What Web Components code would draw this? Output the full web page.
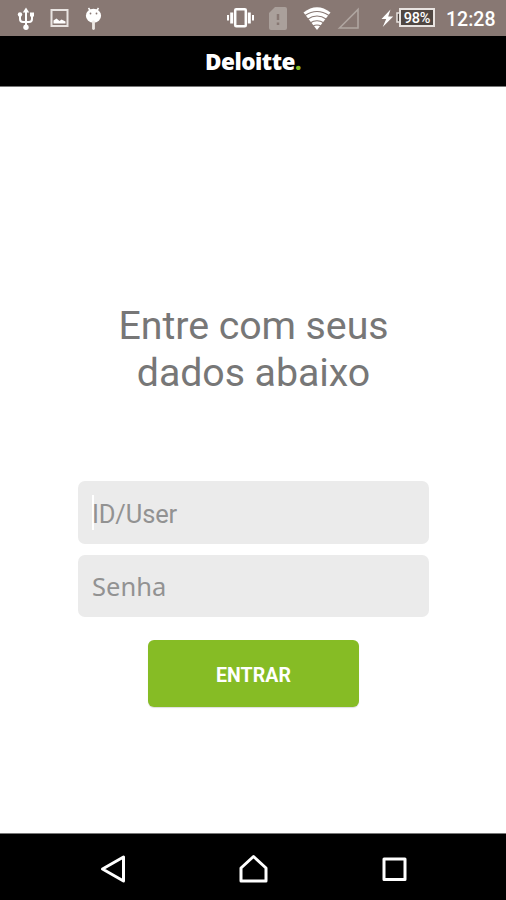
<!DOCTYPE html>
<html lang="pt-BR"><head><meta charset="utf-8"><title>Deloitte</title>
<style>html,body{margin:0;height:100%;background:#fff}</style></head><body>
<login-app></login-app>
<script>
const define=(name,html)=>customElements.define(name,class extends HTMLElement{
  constructor(){super();const t=document.createElement('template');t.innerHTML=html;
    this.attachShadow({mode:'open'}).append(t.content.cloneNode(true));}
});

define('status-bar',`<style>
:host{display:flex;height:36px;background:#887873;box-sizing:border-box;padding:0 12px 0 16px;align-items:flex-start;color:#fff;font:500 19.5px/36px Roboto,sans-serif}
svg{display:block;flex:none;overflow:visible}
.sp{flex:1}
.time{letter-spacing:0;padding-top:2px;width:48px;white-space:nowrap;text-align:right}
.bat{width:32px;height:15px;margin:8px 11px 0 0;border:2px solid #e9e4e1;background:#504742;font:500 14.5px/17px Roboto,sans-serif;text-align:center;letter-spacing:-.2px;flex:none;white-space:nowrap}
</style>
<svg width="20" height="36" viewBox="16 0 20 36" fill="none" stroke="#fff" stroke-width="2"><path d="M26 11v16M20 14v5q0 3 3 3h6q3 0 3-3v-5"/><g fill="#fff" stroke="none"><path d="M26 7.500l3.200 5h-6.400z"/><circle cx="20" cy="14.500" r="2.200"/><path d="M30 12.500h4v4h-4z"/><circle cx="26" cy="27.200" r="2.700"/></g></svg>
<svg style="margin-left:14px" width="20" height="36" viewBox="50 0 20 36"><path d="M51.500 10h16v16h-16z" fill="none" stroke="#e9e4e1" stroke-width="2"/><path d="M53.500 23.500v-3l3-2 3 2.500 2-1.500 4 2v2z" fill="#fff"/></svg>
<svg style="margin-left:15px" width="18" height="36" viewBox="85 0 18 36"><ellipse cx="93.500" cy="15.800" rx="7.600" ry="7" fill="#fff"/><path d="M88.500 8l2 3M98.500 8l-2 3" stroke="#fff" stroke-width="1.500"/><path d="M93.500 22v6.500" stroke="#eee9e5" stroke-width="2.800" stroke-linecap="round"/><circle cx="90.500" cy="13.500" r=".9" fill="#887873"/><circle cx="96.500" cy="13.500" r=".9" fill="#887873"/></svg>
<span class="sp"></span>
<svg style="margin-right:14px" width="28" height="36" viewBox="227 0 28 36" fill="none" stroke="#fff"><rect x="235.200" y="9.200" width="10.600" height="17" rx="1" stroke-width="2.500"/><path d="M231.700 12.500v11M249.300 12.500v11" stroke-width="3"/><path d="M228 15v5.500M253 15v5.500" stroke-width="2"/></svg>
<svg style="margin-right:16px" width="18" height="36" viewBox="269 0 18 36"><path d="M275 7h10q2 0 2 2v19q0 2-2 2h-14q-2 0-2-2v-15z" fill="#aaa09b"/><path d="M278 14v6M278 22.500v2.500" stroke="#887873" stroke-width="2.500"/></svg>
<svg style="margin-right:7px" width="28" height="36" viewBox="303 0 28 36"><path d="M303.500 12.500q13.500-10.500 27 0l-13.500 17.500z" fill="#fff"/><path d="M305 15.500q12-8 24 0M307.500 19.200q9.500-6.400 19 0M310 23q7-4.600 14 0M312.700 26.300q4.300-2.500 8.600 0" fill="none" stroke="#887873" stroke-width="1.100"/></svg>
<svg style="margin-right:23px" width="21" height="36" viewBox="338 0 21 36"><path d="M339.500 28l18.500-18.500v18.500z" fill="none" stroke="#b0a6a1" stroke-width="1.600"/></svg>
<svg style="margin-right:3px" width="11" height="36" viewBox="382 0 11 36"><path d="M390.500 9.500l-9 9.500h4.700l-3.500 8 10.500-10.500h-5z" fill="#fff"/></svg>
<svg width="3" height="36" viewBox="396 0 3 36"><path d="M399 13h-2v9h2" fill="#504742" stroke="#e9e4e1" stroke-width="1.500"/></svg>
<div class="bat">98%</div><div class="time">12:28</div>`);

define('brand-header',`<style>
:host{display:block;height:51px;box-sizing:border-box;background:#000;border-bottom:1px solid #777;color:#fff;text-align:center;font:800 22.500px/52px "Open Sans","Noto Sans",sans-serif;letter-spacing:-.5px}
.dot{color:#86bc25}</style><span>Deloitte<span class="dot">.</span></span>`);

define('text-field',`<style>
:host{display:flex;align-items:center;height:62.500px;width:351px;box-sizing:border-box;padding-left:14px;background:#ebebeb;border-radius:7px;color:#929292;font:400 25.500px/36px Roboto,sans-serif;letter-spacing:-.15px}
:host([kind=password]){font-family:"Noto Sans",sans-serif;letter-spacing:0}
:host([kind=password]) span{padding-top:0}
i{display:none;width:2px;height:35px;background:#fff;margin-right:-2px}
:host([focused]) i{display:block}
span{padding-top:3px}
</style><i></i><span><slot></slot></span>`);

define('primary-button',`<style>
:host{display:flex;align-items:center;justify-content:center;width:211px;height:67px;background:#86bc25;border-radius:6px;color:#fff;font:700 19.500px/24px Roboto,sans-serif;letter-spacing:.1px;box-shadow:0 1px 1px #0002}
span{padding-top:5px}
</style><span><slot></slot></span>`);

define('nav-bar',`<style>
:host{display:flex;height:67px;box-sizing:border-box;background:#000;border-top:1px solid #777;padding:0 98px;justify-content:space-between}
svg{display:block}path{fill:none;stroke:#fff;stroke-width:3;stroke-linejoin:round}
</style>
<svg width="30" height="66" viewBox="98 834 30 66"><path d="M123.500 857v24l-21-12z"/></svg>
<svg width="30" height="66" viewBox="238 834 30 66"><path d="M253.500 856.500l12.500 11.500v13h-25v-13z"/></svg>
<svg width="30" height="66" viewBox="378 834 30 66"><path d="M384 859h21v20.500h-21z"/></svg>`);

define('login-app',`<style>
:host{display:flex;flex-direction:column;height:100vh;overflow:hidden}
main{flex:1;display:flex;flex-direction:column;align-items:center;padding:216px 0 0 1px}
h1{margin:0 0 85px;color:#777;font:400 39.300px/46.500px Roboto,sans-serif;text-align:center;letter-spacing:-.05px}
text-field{margin-bottom:11px}
primary-button{margin-top:11.500px}
</style>
<status-bar></status-bar><brand-header></brand-header>
<main><h1>Entre com seus<br>dados abaixo</h1>
<text-field focused>ID/User</text-field><text-field kind="password">Senha</text-field>
<primary-button role="button">ENTRAR</primary-button></main>
<nav-bar></nav-bar>`);
</script></body></html>
